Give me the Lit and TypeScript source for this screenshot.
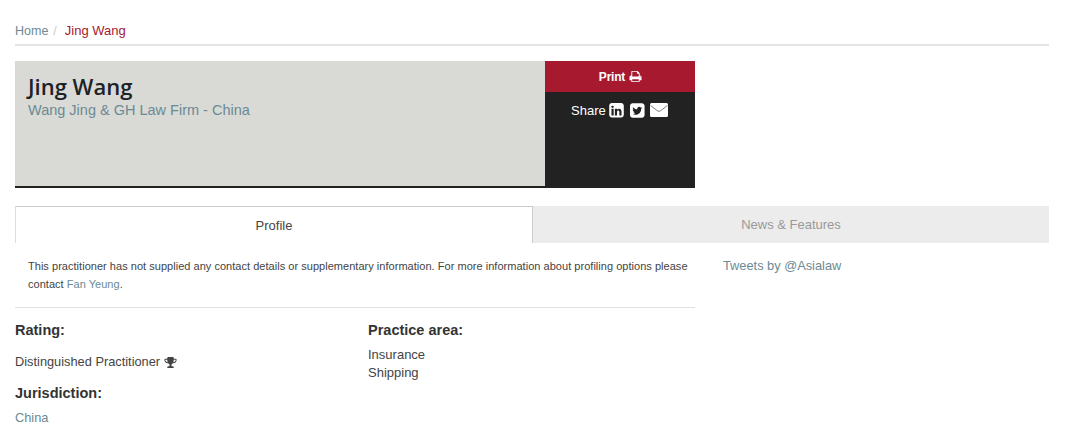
import { LitElement, html, css } from 'lit';
import { customElement } from 'lit/decorators.js';

const printIcon = html`<svg class="ico" width="13" height="13" viewBox="0 0 1792 1792"><path fill="currentColor" d="M448 1536h896v-256h-896v256zm0-640h896v-384h-160q-40 0-68-28t-28-68v-160h-640v640zm1152 64q0-26-19-45t-45-19-45 19-19 45 19 45 45 19 45-19 19-45zm128 0v416q0 13-9.500 22.500t-22.500 9.500h-224v160q0 40-28 68t-68 28h-960q-40 0-68-28t-28-68v-160h-224q-13 0-22.500-9.500t-9.500-22.500v-416q0-79 56.500-135.500t135.500-56.500h64v-544q0-40 28-68t68-28h672q40 0 88 20t76 48l152 152q28 28 48 76t20 88v256h64q79 0 135.500 56.500t56.500 135.500z"/></svg>`;
const linkedinIcon = html`<svg class="ico linkedin" width="17" height="17" viewBox="0 0 1792 1792"><path fill="currentColor" d="M365 1414h231v-694h-231v694zm246-908q-1-52-36-86t-93-34-94.500 34-36.500 86q0 51 35.500 85.500t92.500 34.500h1q59 0 95-34.500t36-85.500zm585 908h231v-398q0-154-73-233t-193-79q-136 0-209 117h2v-101h-231q3 66 0 694h231v-388q0-38 7-56 15-35 45-59.500t74-24.500q116 0 116 157v371zm468-1030v960q0 119-84.500 203.500t-203.500 84.500h-960q-119 0-203.500-84.500t-84.500-203.500v-960q0-119 84.500-203.500t203.500-84.500h960q119 0 203.500 84.500t84.500 203.500z"/></svg>`;
const twitterIcon = html`<svg class="ico" width="17" height="17" viewBox="0 0 1792 1792"><path fill="currentColor" d="M1280 610q-56 25-121 34 68-40 93-117-65 38-134 51-61-66-153-66-87 0-148.500 61.500t-61.500 148.500q0 29 5 48-129-7-242-65t-192-155q-29 50-29 106 0 114 91 175-47-1-100-26v2q0 75 50 133.500t123 72.500q-29 8-51 8-13 0-39-4 21 63 74.500 104t121.500 42q-116 90-261 90-26 0-50-3 148 94 322 94 112 0 210-35.500t168-95 120.500-137 75-162 24.500-168.500q0-18-1-27 63-45 105-109zm256-194v960q0 119-84.500 203.500t-203.500 84.500h-960q-119 0-203.500-84.500t-84.500-203.500v-960q0-119 84.500-203.500t203.500-84.500h960q119 0 203.500 84.500t84.500 203.500z"/></svg>`;
const envelopeIcon = html`<svg class="ico mail" width="18" height="14" viewBox="0 0 18 14"><rect width="18" height="14" rx="1.5" fill="currentColor"/><path d="M0.5 2.5 L7.5 7.8 Q9 8.8 10.5 7.800 L17.500 2.500" fill="none" stroke="#222" stroke-opacity="0.65" stroke-width="0.9"/></svg>`;
const trophyIcon = html`<svg class="ico" width="13" height="13" viewBox="0 0 1792 1792"><path fill="currentColor" d="M522 883q-74-162-74-371h-256v96q0 78 94.500 162t235.500 113zm1078-275v-96h-256q0 209-74 371 141-29 235.500-113t94.500-162zm128-128v128q0 71-41.500 143t-112 130-173 97.500-215.500 44.500q-42 54-95 95-38 34-52.500 72.500t-14.500 89.500q0 54 30.500 91t97.500 37q75 0 133.500 45.500t58.500 114.500v64q0 14-9 23t-23 9h-832q-14 0-23-9t-9-23v-64q0-69 58.500-114.500t133.500-45.500q67 0 97.500-37t30.500-91q0-51-14.500-89.500t-52.500-72.500q-53-41-95-95-113-5-215.500-44.500t-173-97.500-112-130-41.500-143v-128q0-40 28-68t68-28h288v-96q0-66 47-113t113-47h576q66 0 113 47t47 113v96h288q40 0 68 28t28 68z"/></svg>`;

@customElement('app-root')
export class AppRoot extends LitElement {

  static styles = css`
    :host {
      display: block;
      background: #fff;
      color: #444;
      font-family: "Liberation Sans", Arial, sans-serif;
      font-size: 13px;
    }

    a {
      color: #6b8a94;
      text-decoration: none;
    }

    .ico {
      display: block;
      flex: none;
    }

    .page {
      padding: 22px 31px 11px 15px;
    }

    .breadcrumb {
      display: flex;
      height: 22px;
      border-bottom: 2px solid #e4e4e4;
      font-size: 12.5px;
      line-height: 18px;
    }

    .breadcrumb .sep {
      color: #ccc;
      margin: 0 8px 0 5px;
    }

    .breadcrumb .current {
      color: #a6192e;
      font-size: 13px;
    }

    .header {
      display: flex;
      width: 680px;
      height: 127px;
      margin-top: 15px;
    }

    .title {
      width: 530px;
      box-sizing: border-box;
      padding: 10px 13px 0;
      background: #d9dad6;
      border-bottom: 2px solid #222;
    }

    .title h1 {
      margin: 0;
      color: #1c2226;
      font-family: "Open Sans", sans-serif;
      font-size: 22px;
      font-weight: 600;
      line-height: 30px;
    }

    .title p {
      margin: 0;
      color: #6b8a94;
      font-size: 14.5px;
      line-height: 18px;
    }

    .actions {
      width: 150px;
      background: #222;
      color: #fff;
    }

    .print {
      display: flex;
      justify-content: center;
      align-items: center;
      gap: 4px;
      height: 31px;
      padding-left: 1px;
      background: #a6192e;
      font-size: 12px;
      font-weight: 700;
      letter-spacing: -0.2px;
    }

    .share {
      display: flex;
      align-items: center;
      gap: 4px;
      height: 36px;
      padding-left: 26px;
    }

    .share .linkedin {
      margin: 0 1px 0 -2px;
    }

    .share .mail {
      margin-left: -1px;
    }

    .tabs {
      display: flex;
      margin-top: 18px;
      height: 37px;
      line-height: 37px;
      text-align: center;
    }

    .tab {
      box-sizing: border-box;
      width: 518px;
      border: 1px solid #ccc;
      border-left-color: #ddd;
      border-bottom: none;
      background: #fff;
      color: #444;
    }

    .tab.off {
      flex: 1;
      border: none;
      background: #ececec;
      color: #999;
    }

    .body {
      display: flex;
    }

    .main {
      width: 680px;
    }

    .notice {
      margin: 14px 0 0;
      padding: 0 0 14px 13px;
      border-bottom: 1px solid #e0e0e0;
      font-size: 11px;
      letter-spacing: 0.03px;
      line-height: 18px;
    }

    .details {
      display: flex;
    }

    .col {
      flex: none;
      width: 353px;
    }

    h3 {
      margin: 0;
      color: #333;
      font-size: 14.5px;
      font-weight: 700;
      line-height: 20px;
    }

    .col > h3:first-child {
      margin-top: 12px;
    }

    .rating {
      display: flex;
      align-items: center;
      gap: 4px;
      margin: 13px 0 12px;
      font-size: 12.8px;
      line-height: 18px;
    }

    .list {
      margin-top: 6px;
      line-height: 18px;
    }

    .value {
      margin-top: 6px;
      font-size: 12.8px;
      line-height: 18px;
    }

    .tweets {
      margin: 14px 0 0 28px;
      font-size: 12.8px;
      line-height: 18px;
    }
  `;

  render() {
    return html`
      <div class="page">
        <nav class="breadcrumb">
          <a href="#">Home</a><span class="sep">/</span><span class="current">Jing Wang</span>
        </nav>
        <section class="header">
          <div class="title">
            <h1>Jing Wang</h1>
            <p>Wang Jing &amp; GH Law Firm - China</p>
          </div>
          <div class="actions">
            <div class="print">Print ${printIcon}</div>
            <div class="share">Share ${linkedinIcon} ${twitterIcon} ${envelopeIcon}</div>
          </div>
        </section>
        <div class="tabs">
          <div class="tab">Profile</div>
          <div class="tab off">News &amp; Features</div>
        </div>
        <div class="body">
          <div class="main">
            <p class="notice">This practitioner has not supplied any contact details or supplementary information. For more information about profiling options please contact <a href="#">Fan Yeung</a>.</p>
            <div class="details">
              <div class="col">
                <h3>Rating:</h3>
                <div class="rating">Distinguished Practitioner ${trophyIcon}</div>
                <h3>Jurisdiction:</h3>
                <div class="value"><a href="#">China</a></div>
              </div>
              <div class="col">
                <h3>Practice area:</h3>
                <div class="list">Insurance<br />Shipping</div>
              </div>
            </div>
          </div>
          <a class="tweets" href="#">Tweets by @Asialaw</a>
        </div>
      </div>
    `;
  }
}
